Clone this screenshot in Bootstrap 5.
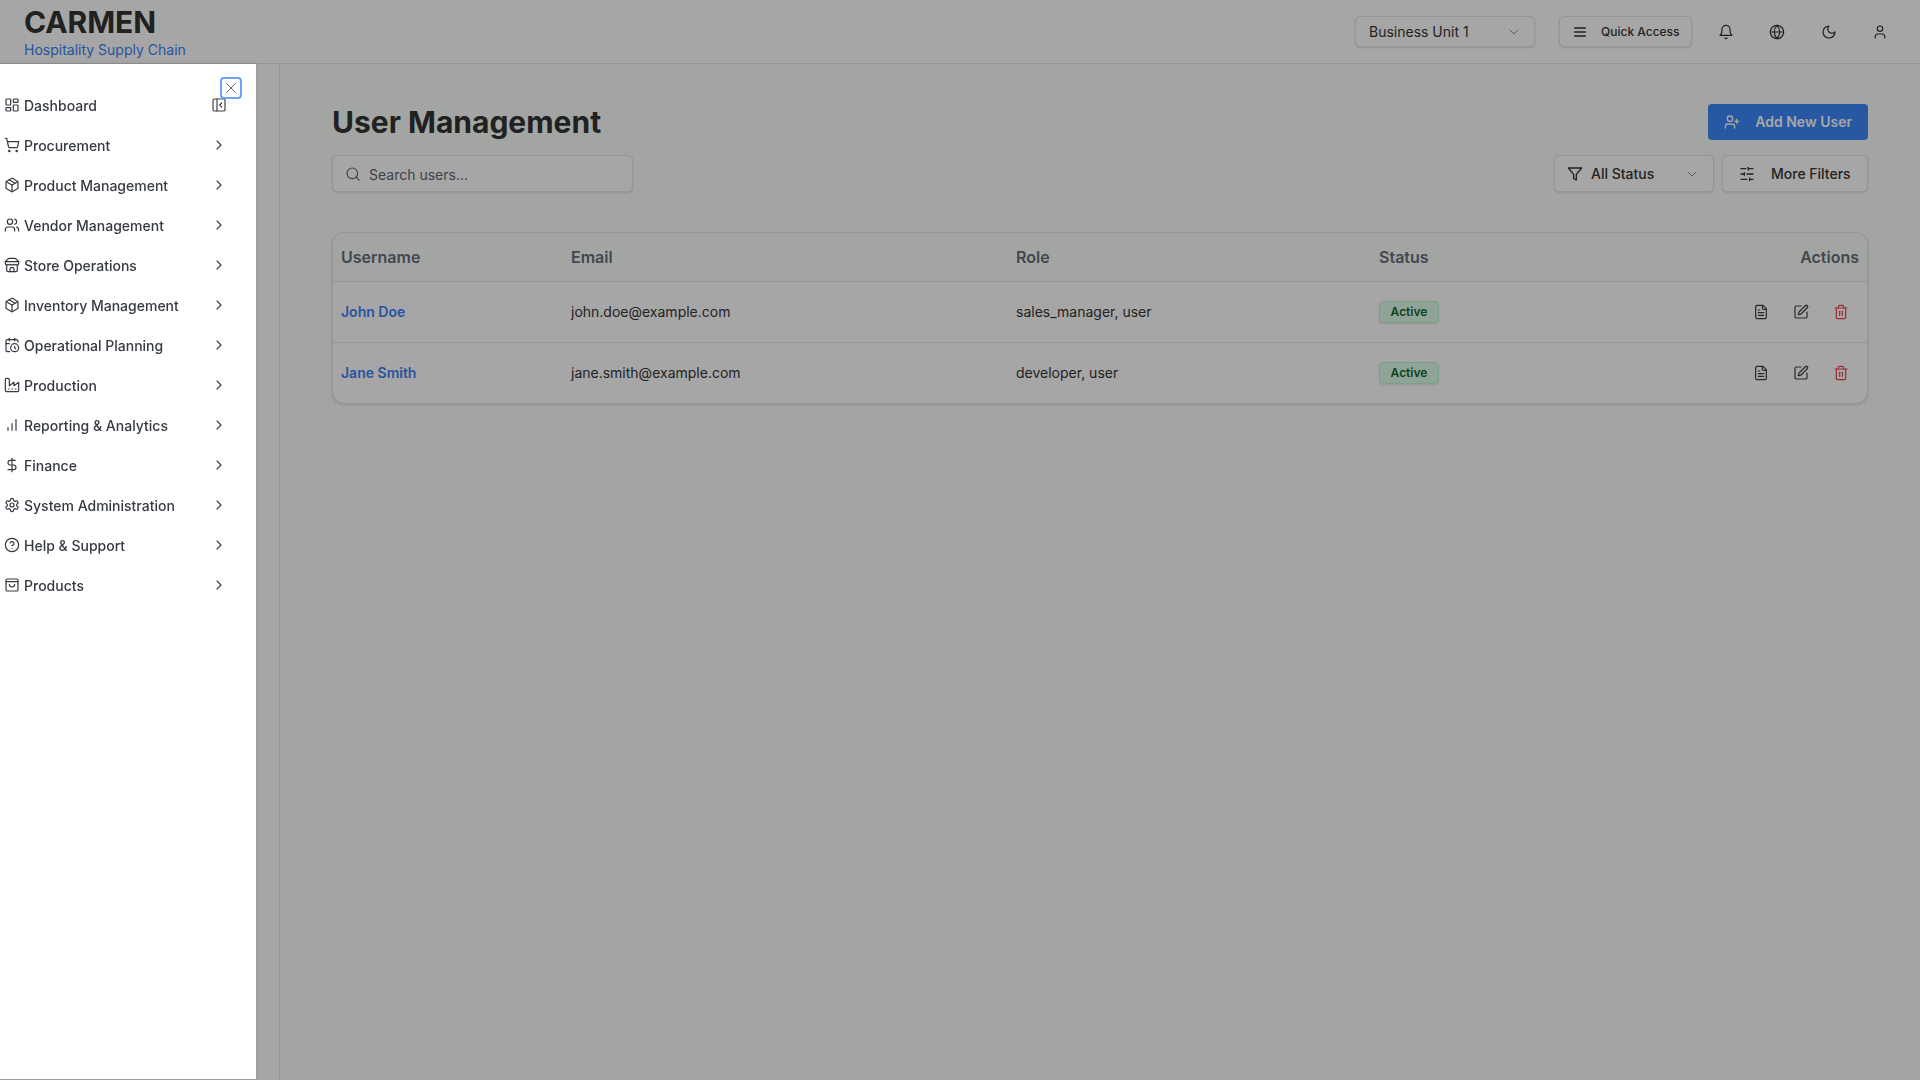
<!DOCTYPE html>
<html lang="en">
<head>
<meta charset="UTF-8">
<meta name="viewport" content="width=device-width, initial-scale=1.0">
<title>User Management - Carmen</title>
<link href="https://cdn.jsdelivr.net/npm/bootstrap@5.3.0/dist/css/bootstrap.min.css" rel="stylesheet">
<style>
  html, body { height: 100%; }
  body { font-family: Inter, "Liberation Sans", sans-serif; font-size: 14px; color: #363636; background: #fff; overflow: hidden; }
  .ic { width: 16px; height: 16px; flex: none; fill: none; stroke: currentColor; stroke-width: 2; stroke-linecap: round; stroke-linejoin: round; }
  .page-shade { position: fixed; inset: 0; background: rgba(0, 0, 0, .35); z-index: 1000; }

  .top-bar { height: 65px; padding: 0 32px 0 24px; background: #fff; border-bottom: 2px solid #e4e5e7; }
  .brand-name { font-size: 30px; font-weight: 700; line-height: 36px; letter-spacing: -.1px; color: #333; margin-top: 1px; }
  .brand-sub { font-size: 14px; line-height: 20px; color: #3b82f6; }
  .soft-box { background: #fff; border: 1px solid #e2e5ea; border-radius: 5px; box-shadow: 0 1px 2px rgba(0, 0, 0, .12); color: #363636; display: flex; align-items: center; }
  .unit-select { width: 180px; height: 31px; padding: 0 12px 0 13px; font-size: 14px; margin-right: 24px; }
  .quick-btn { width: 133px; height: 31px; padding: 0 12px; font-size: 12px; font-weight: 500; margin-right: 26px; white-space: nowrap; }
  .quick-btn .ic { margin-right: 13px; }
  .chev { color: #8a8f98; width: 16px; height: 16px; stroke-width: 1.5; }
  .top-icon { width: 16px; height: 16px; color: #333; stroke-width: 1.8; }
  .top-icons { width: 170px; padding-right: 0; }

  .body-wrap { height: calc(100vh - 65px); margin-top: -1px; }
  .side-bar { position: relative; z-index: 1010; width: 256px; flex: none; background: #fff; box-shadow: 0 0 4px rgba(0, 0, 0, .15); padding-top: 21px; }
  .side-item { height: 40px; padding: 0 29px 0 0; font-size: 14px; font-weight: 500; color: #363a42; text-decoration: none; }
  .side-item .ic { margin: 0 4px 0 4px; stroke-width: 1.8; }
  .side-item .go { width: 16px; height: 16px; margin: 0; color: #444; }
  .close-btn { position: absolute; top: 13px; left: 220px; width: 22px; height: 22px; padding: 0; border: 2px solid #6ea0f5; border-radius: 4px; background: #fff; color: #666; display: flex; align-items: center; justify-content: center; }
  .close-btn .ic { width: 18px; height: 18px; stroke-width: 1.3; }

  .gutter { width: 24px; flex: none; background: #fff; border-right: 1px solid #e4e6e8; }
  .main-area { flex: 1; background: #fbfefb; padding: 40px 52px 0; }
  .page-title { font-size: 30px; line-height: 36px; font-weight: 700; color: #333; margin: 0; }
  .add-btn { width: 160px; height: 36px; background: #3d88fb; border-radius: 4px; border: 0; color: #fff; font-weight: 600; font-size: 14px; padding: 0 16px 1px; display: flex; align-items: center; justify-content: space-between; }
  .tool-row { margin-top: 15px; margin-bottom: 40px; }
  .search-box { width: 301px; height: 37px; padding: 1px 12px 0; font-size: 14px; color: #5f6672; }
  .search-box .ic { margin-right: 8px; margin-top: -1px; color: #5f6672; stroke-width: 1.7; }
  .status-select { width: 160px; height: 37px; padding: 0 13px 0 12px; font-size: 14px; font-weight: 500; margin-right: 8px; }
  .status-select .ic:first-child { margin-right: 8px; }
  .filter-btn { width: 146px; height: 37px; padding: 0 16px; font-size: 14px; font-weight: 500; }
  .filter-btn .ic { margin-right: 16px; }

  .user-card { background: #fff; border: 1px solid #e2e5ea; border-radius: 12px; box-shadow: 0 1px 3px rgba(0, 0, 0, .14); overflow: hidden; }
  .user-table { margin: 0; table-layout: fixed; --bs-table-bg: transparent; font-size: 14px; color: #363636; }
  .user-table th { height: 48px; padding: 0 8px; vertical-align: middle; font-size: 16px; font-weight: 600; color: #666d7b; border-bottom: 1px solid #e6e8ea; background: #fbfefb; }
  .user-table td { height: 61px; padding: 0 8px; vertical-align: middle; border-bottom: 1px solid #e6e8ea; color: #363636; }
  .user-table tr:last-child td { border-bottom: 0; }
  .user-link { color: #3b82f6; font-weight: 600; text-decoration: none; }
  .status-pill { display: inline-block; height: 22px; width: 60px; line-height: 20px; margin-top: 1px; text-align: center; font-size: 12px; font-weight: 600; color: #166534; background: #dcfce7; border: 1px solid #bbf7d0; border-radius: 4px; box-shadow: 0 1px 2px rgba(0, 0, 0, .1); }
  .act-ic { display: inline-block; margin-left: 24px; margin-bottom: 2px; color: #3a3e44; vertical-align: middle; stroke-width: 1.8; }
  .act-ic.del { color: #ef4444; margin-right: 10px; }
</style>
</head>
<body>
<svg width="0" height="0" class="position-absolute">
  <symbol id="i-dash" viewBox="0 0 24 24"><rect x="3" y="3" width="7" height="9" rx="1"/><rect x="14" y="3" width="7" height="5" rx="1"/><rect x="14" y="12" width="7" height="9" rx="1"/><rect x="3" y="16" width="7" height="5" rx="1"/></symbol>
  <symbol id="i-cart" viewBox="0 0 24 24"><circle cx="8" cy="21" r="1"/><circle cx="19" cy="21" r="1"/><path d="M2.05 2.05h2l2.66 12.42a2 2 0 0 0 2 1.58h9.78a2 2 0 0 0 1.95-1.57l1.65-7.43H5.12"/></symbol>
  <symbol id="i-pack" viewBox="0 0 24 24"><path d="m7.5 4.27 9 5.15"/><path d="M21 8a2 2 0 0 0-1-1.73l-7-4a2 2 0 0 0-2 0l-7 4A2 2 0 0 0 3 8v8a2 2 0 0 0 1 1.73l7 4a2 2 0 0 0 2 0l7-4A2 2 0 0 0 21 16Z"/><path d="m3.3 7 8.7 5 8.7-5"/><path d="M12 22V12"/></symbol>
  <symbol id="i-users" viewBox="0 0 24 24"><path d="M16 21v-2a4 4 0 0 0-4-4H6a4 4 0 0 0-4 4v2"/><circle cx="9" cy="7" r="4"/><path d="M22 21v-2a4 4 0 0 0-3-3.87"/><path d="M16 3.13a4 4 0 0 1 0 7.75"/></symbol>
  <symbol id="i-store" viewBox="0 0 24 24"><path d="m2 7 4.41-4.41A2 2 0 0 1 7.83 2h8.34a2 2 0 0 1 1.42.59L22 7"/><path d="M4 12v8a2 2 0 0 0 2 2h12a2 2 0 0 0 2-2v-8"/><path d="M15 22v-4a2 2 0 0 0-2-2h-2a2 2 0 0 0-2 2v4"/><path d="M2 7h20"/><path d="M22 7v3a2 2 0 0 1-2 2a2.7 2.7 0 0 1-1.59-.63.7.7 0 0 0-.82 0A2.7 2.7 0 0 1 16 12a2.7 2.7 0 0 1-1.59-.63.7.7 0 0 0-.82 0A2.7 2.7 0 0 1 12 12a2.7 2.7 0 0 1-1.59-.63.7.7 0 0 0-.82 0A2.7 2.7 0 0 1 8 12a2.7 2.7 0 0 1-1.59-.63.7.7 0 0 0-.82 0A2.7 2.7 0 0 1 4 12a2 2 0 0 1-2-2V7"/></symbol>
  <symbol id="i-plan" viewBox="0 0 24 24"><path d="M21 7.5V6a2 2 0 0 0-2-2H5a2 2 0 0 0-2 2v14a2 2 0 0 0 2 2h3.5"/><path d="M16 2v4"/><path d="M8 2v4"/><path d="M3 10h5"/><path d="M17.5 17.5 16 16.3V14"/><circle cx="16" cy="16" r="6"/></symbol>
  <symbol id="i-factory" viewBox="0 0 24 24"><path d="M2 20a2 2 0 0 0 2 2h16a2 2 0 0 0 2-2V8l-7 5V8l-7 5V4a2 2 0 0 0-2-2H4a2 2 0 0 0-2 2Z"/><path d="M17 18h1"/><path d="M12 18h1"/><path d="M7 18h1"/></symbol>
  <symbol id="i-bars" viewBox="0 0 24 24"><path d="M12 20V10"/><path d="M18 20V4"/><path d="M6 20v-4"/></symbol>
  <symbol id="i-dollar" viewBox="0 0 24 24"><path d="M12 2v20"/><path d="M17 5H9.5a3.5 3.5 0 0 0 0 7h5a3.5 3.5 0 0 1 0 7H6"/></symbol>
  <symbol id="i-gear" viewBox="0 0 24 24"><path d="M12.22 2h-.44a2 2 0 0 0-2 2v.18a2 2 0 0 1-1 1.73l-.43.25a2 2 0 0 1-2 0l-.15-.08a2 2 0 0 0-2.73.73l-.22.38a2 2 0 0 0 .73 2.73l.15.1a2 2 0 0 1 1 1.72v.51a2 2 0 0 1-1 1.74l-.15.09a2 2 0 0 0-.73 2.73l.22.38a2 2 0 0 0 2.73.73l.15-.08a2 2 0 0 1 2 0l.43.25a2 2 0 0 1 1 1.73V20a2 2 0 0 0 2 2h.44a2 2 0 0 0 2-2v-.18a2 2 0 0 1 1-1.73l.43-.25a2 2 0 0 1 2 0l.15.08a2 2 0 0 0 2.73-.73l.22-.39a2 2 0 0 0-.73-2.73l-.15-.08a2 2 0 0 1-1-1.74v-.5a2 2 0 0 1 1-1.74l.15-.09a2 2 0 0 0 .73-2.73l-.22-.38a2 2 0 0 0-2.73-.73l-.15.08a2 2 0 0 1-2 0l-.43-.25a2 2 0 0 1-1-1.73V4a2 2 0 0 0-2-2z"/><circle cx="12" cy="12" r="3"/></symbol>
  <symbol id="i-help" viewBox="0 0 24 24"><circle cx="12" cy="12" r="10"/><path d="M9.09 9a3 3 0 0 1 5.83 1c0 2-3 3-3 3"/><path d="M12 17h.01"/></symbol>
  <symbol id="i-bag" viewBox="0 0 24 24"><rect x="3" y="3" width="18" height="18" rx="2"/><path d="M3 7h18"/><path d="M16 11a4 4 0 0 1-8 0"/></symbol>
  <symbol id="i-right" viewBox="0 0 24 24"><path d="m9 18 6-6-6-6"/></symbol>
  <symbol id="i-down" viewBox="0 0 24 24"><path d="m6 9 6 6 6-6"/></symbol>
  <symbol id="i-panel" viewBox="0 0 24 24"><rect x="3" y="3" width="18" height="18" rx="2"/><path d="M9 3v18"/><path d="m16 15-3-3 3-3"/></symbol>
  <symbol id="i-x" viewBox="0 0 24 24"><path d="M18 6 6 18"/><path d="m6 6 12 12"/></symbol>
  <symbol id="i-menu" viewBox="0 0 24 24"><path d="M4 6h16"/><path d="M4 12h16"/><path d="M4 18h16"/></symbol>
  <symbol id="i-bell" viewBox="0 0 24 24"><path d="M6 8a6 6 0 0 1 12 0c0 7 3 9 3 9H3s3-2 3-9"/><path d="M10.3 21a1.94 1.94 0 0 0 3.4 0"/></symbol>
  <symbol id="i-globe" viewBox="0 0 24 24"><circle cx="12" cy="12" r="10"/><path d="M12 2a14.5 14.5 0 0 0 0 20 14.5 14.5 0 0 0 0-20"/><path d="M2 12h20"/></symbol>
  <symbol id="i-moon" viewBox="0 0 24 24"><path d="M12 3a6 6 0 0 0 9 9 9 9 0 1 1-9-9Z"/></symbol>
  <symbol id="i-user" viewBox="0 0 24 24"><path d="M19 21v-2a4 4 0 0 0-4-4H9a4 4 0 0 0-4 4v2"/><circle cx="12" cy="7" r="4"/></symbol>
  <symbol id="i-useradd" viewBox="0 0 24 24"><path d="M16 21v-2a4 4 0 0 0-4-4H6a4 4 0 0 0-4 4v2"/><circle cx="9" cy="7" r="4"/><path d="M19 8v6"/><path d="M22 11h-6"/></symbol>
  <symbol id="i-search" viewBox="0 0 24 24"><circle cx="11" cy="11" r="8"/><path d="m21 21-4.3-4.3"/></symbol>
  <symbol id="i-filter" viewBox="0 0 24 24"><path d="M22 3H2l8 9.46V19l4 2v-8.54Z"/></symbol>
  <symbol id="i-sliders" viewBox="0 0 24 24"><path d="M21 4h-7"/><path d="M10 4H3"/><path d="M21 12h-9"/><path d="M8 12H3"/><path d="M21 20h-5"/><path d="M12 20H3"/><path d="M14 2v4"/><path d="M8 10v4"/><path d="M16 18v4"/></symbol>
  <symbol id="i-file" viewBox="0 0 24 24"><path d="M15 2H6a2 2 0 0 0-2 2v16a2 2 0 0 0 2 2h12a2 2 0 0 0 2-2V7Z"/><path d="M14 2v4a2 2 0 0 0 2 2h4"/><path d="M10 9H8"/><path d="M16 13H8"/><path d="M16 17H8"/></symbol>
  <symbol id="i-pen" viewBox="0 0 24 24"><path d="M12 3H5a2 2 0 0 0-2 2v14a2 2 0 0 0 2 2h14a2 2 0 0 0 2-2v-7"/><path d="M18.375 2.625a1 1 0 0 1 3 3l-9.013 9.014a2 2 0 0 1-.853.505l-2.873.84a.5.5 0 0 1-.62-.62l.84-2.873a2 2 0 0 1 .506-.852z"/></symbol>
  <symbol id="i-trash" viewBox="0 0 24 24"><path d="M3 6h18"/><path d="M19 6v14c0 1-1 2-2 2H7c-1 0-2-1-2-2V6"/><path d="M8 6V4c0-1 1-2 2-2h4c1 0 2 1 2 2v2"/><path d="M10 11v6"/><path d="M14 11v6"/></symbol>
</svg>

<!-- Top bar -->
<header class="top-bar d-flex align-items-center justify-content-between">
  <div>
    <div class="brand-name">CARMEN</div>
    <div class="brand-sub">Hospitality Supply Chain</div>
  </div>
  <div class="d-flex align-items-center">
    <div class="soft-box unit-select justify-content-between">
      <span>Business Unit 1</span>
      <svg class="ic chev"><use href="#i-down"/></svg>
    </div>
    <div class="soft-box quick-btn">
      <svg class="ic"><use href="#i-menu"/></svg>
      <span>Quick Access</span>
    </div>
    <div class="d-flex align-items-center justify-content-between top-icons">
      <svg class="ic top-icon"><use href="#i-bell"/></svg>
      <svg class="ic top-icon"><use href="#i-globe"/></svg>
      <svg class="ic top-icon"><use href="#i-moon"/></svg>
      <svg class="ic top-icon"><use href="#i-user"/></svg>
    </div>
  </div>
</header>

<div class="body-wrap d-flex">
  <!-- Sidebar -->
  <aside class="side-bar">
    <button class="close-btn" type="button" aria-label="Close"><svg class="ic"><use href="#i-x"/></svg></button>
    <a class="side-item d-flex align-items-center" href="#"><svg class="ic"><use href="#i-dash"/></svg><span class="flex-grow-1">Dashboard</span><svg class="ic go"><use href="#i-panel"/></svg></a>
    <a class="side-item d-flex align-items-center" href="#"><svg class="ic"><use href="#i-cart"/></svg><span class="flex-grow-1">Procurement</span><svg class="ic go"><use href="#i-right"/></svg></a>
    <a class="side-item d-flex align-items-center" href="#"><svg class="ic"><use href="#i-pack"/></svg><span class="flex-grow-1">Product Management</span><svg class="ic go"><use href="#i-right"/></svg></a>
    <a class="side-item d-flex align-items-center" href="#"><svg class="ic"><use href="#i-users"/></svg><span class="flex-grow-1">Vendor Management</span><svg class="ic go"><use href="#i-right"/></svg></a>
    <a class="side-item d-flex align-items-center" href="#"><svg class="ic"><use href="#i-store"/></svg><span class="flex-grow-1">Store Operations</span><svg class="ic go"><use href="#i-right"/></svg></a>
    <a class="side-item d-flex align-items-center" href="#"><svg class="ic"><use href="#i-pack"/></svg><span class="flex-grow-1">Inventory Management</span><svg class="ic go"><use href="#i-right"/></svg></a>
    <a class="side-item d-flex align-items-center" href="#"><svg class="ic"><use href="#i-plan"/></svg><span class="flex-grow-1">Operational Planning</span><svg class="ic go"><use href="#i-right"/></svg></a>
    <a class="side-item d-flex align-items-center" href="#"><svg class="ic"><use href="#i-factory"/></svg><span class="flex-grow-1">Production</span><svg class="ic go"><use href="#i-right"/></svg></a>
    <a class="side-item d-flex align-items-center" href="#"><svg class="ic"><use href="#i-bars"/></svg><span class="flex-grow-1">Reporting &amp; Analytics</span><svg class="ic go"><use href="#i-right"/></svg></a>
    <a class="side-item d-flex align-items-center" href="#"><svg class="ic"><use href="#i-dollar"/></svg><span class="flex-grow-1">Finance</span><svg class="ic go"><use href="#i-right"/></svg></a>
    <a class="side-item d-flex align-items-center" href="#"><svg class="ic"><use href="#i-gear"/></svg><span class="flex-grow-1">System Administration</span><svg class="ic go"><use href="#i-right"/></svg></a>
    <a class="side-item d-flex align-items-center" href="#"><svg class="ic"><use href="#i-help"/></svg><span class="flex-grow-1">Help &amp; Support</span><svg class="ic go"><use href="#i-right"/></svg></a>
    <a class="side-item d-flex align-items-center" href="#"><svg class="ic"><use href="#i-bag"/></svg><span class="flex-grow-1">Products</span><svg class="ic go"><use href="#i-right"/></svg></a>
  </aside>
  <div class="gutter"></div>

  <!-- Main -->
  <main class="main-area">
    <div class="d-flex align-items-center justify-content-between">
      <h1 class="page-title">User Management</h1>
      <button class="add-btn" type="button">
        <svg class="ic"><use href="#i-useradd"/></svg>
        <span>Add New User</span>
      </button>
    </div>
    <div class="tool-row d-flex align-items-center justify-content-between">
      <div class="soft-box search-box">
        <svg class="ic"><use href="#i-search"/></svg>
        <span>Search users...</span>
      </div>
      <div class="d-flex">
        <div class="soft-box status-select">
          <svg class="ic"><use href="#i-filter"/></svg>
          <span class="flex-grow-1">All Status</span>
          <svg class="ic chev"><use href="#i-down"/></svg>
        </div>
        <div class="soft-box filter-btn">
          <svg class="ic"><use href="#i-sliders"/></svg>
          <span>More Filters</span>
        </div>
      </div>
    </div>

    <div class="user-card">
      <table class="table user-table">
        <thead>
          <tr>
            <th style="width: 230px">Username</th>
            <th style="width: 445px">Email</th>
            <th style="width: 363px">Role</th>
            <th>Status</th>
            <th class="text-end" style="width: 200px">Actions</th>
          </tr>
        </thead>
        <tbody>
          <tr>
            <td><a class="user-link" href="#">John Doe</a></td>
            <td>john.doe@example.com</td>
            <td>sales_manager, user</td>
            <td><span class="status-pill">Active</span></td>
            <td class="text-end"><svg class="ic act-ic"><use href="#i-file"/></svg><svg class="ic act-ic"><use href="#i-pen"/></svg><svg class="ic act-ic del"><use href="#i-trash"/></svg></td>
          </tr>
          <tr>
            <td><a class="user-link" href="#">Jane Smith</a></td>
            <td>jane.smith@example.com</td>
            <td>developer, user</td>
            <td><span class="status-pill">Active</span></td>
            <td class="text-end"><svg class="ic act-ic"><use href="#i-file"/></svg><svg class="ic act-ic"><use href="#i-pen"/></svg><svg class="ic act-ic del"><use href="#i-trash"/></svg></td>
          </tr>
        </tbody>
      </table>
    </div>
  </main>
</div>

<div class="page-shade"></div>

<script src="https://cdn.jsdelivr.net/npm/bootstrap@5.3.0/dist/js/bootstrap.bundle.min.js"></script>
</body>
</html>
